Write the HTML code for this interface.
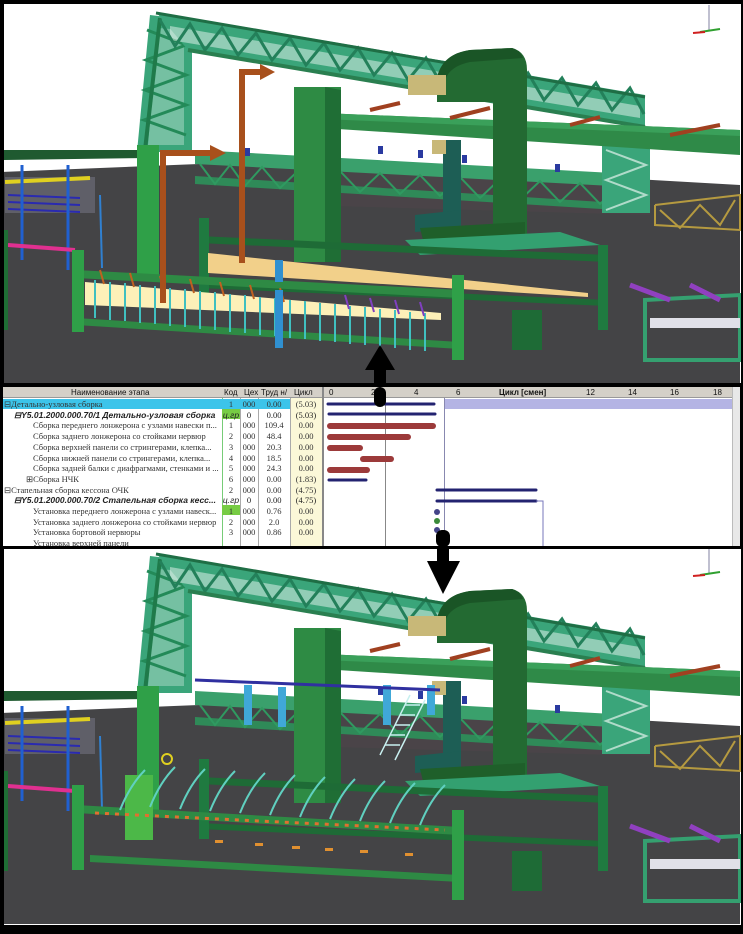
<!DOCTYPE html>
<html><head><meta charset="utf-8"><style>
*{margin:0;padding:0;box-sizing:border-box}
body{width:743px;height:934px;background:#000;position:relative;overflow:hidden;font-family:"Liberation Serif",serif}
.panel{position:absolute;left:4px;width:737px;background:#fff;overflow:hidden}
svg{display:block}
#tbl{position:absolute;left:3px;top:387px;width:737px;height:159px;background:#fff;overflow:hidden}
.row{position:absolute;left:0;height:11px;font-size:8.5px;line-height:11px;white-space:nowrap;color:#333}
.c{position:absolute;top:0;height:11px;text-align:center}
</style></head><body>

<!-- TOP PANEL -->
<div class="panel" style="top:4px;height:379px">
<svg width="737" height="379" viewBox="4 4 737 379">
<defs>
<g id="scene">
 <polygon points="0,172 300,160 740,185 740,383 0,383" fill="#444446"/>
 <polygon points="300,165 650,185 650,215 300,205" fill="#4a4448"/>
 <polygon points="0,150 150,150 150,158 0,160" fill="#1f5a30"/>
 <!-- back lower truss -->
 <polygon points="195,150 650,175 650,188 195,164" fill="#3aa06c"/>
 <polygon points="195,176 650,205 650,212 195,184" fill="#2f8a58"/>
 <polyline points="200,164 215,184 230,165 245,186 262,167 280,188 300,169 320,190 340,171 360,192 380,173 400,194 420,175 440,196 460,177 480,198 500,179 520,200 540,181 560,202 580,183 600,204 620,185 640,206" fill="none" stroke="#2f9a60" stroke-width="2"/>
 <g fill="#2a3aa0"><rect x="378" y="146" width="5" height="8"/><rect x="418" y="150" width="5" height="8"/><rect x="462" y="155" width="5" height="8"/><rect x="555" y="164" width="5" height="8"/><rect x="245" y="148" width="5" height="8"/></g>
 <!-- left leg of truss -->
 <polygon points="150,15 192,20 192,152 137,152" fill="#3aa57a"/>
 <polygon points="158,28 184,30 184,145 148,145" fill="#fff" opacity=".3"/>
 <polyline points="147,30 186,45 146,60 186,75 145,90 186,105 144,120 186,135" fill="none" stroke="#238a58" stroke-width="3"/>
 <line x1="160" y1="18" x2="145" y2="150" stroke="#1f7a4a" stroke-width="4"/>
 <!-- truss top -->
 <polygon points="156,12 645,95 645,128 188,50" fill="#3aa57a"/>
 <polygon points="170,26 640,106 640,118 170,40" fill="#fff" opacity=".45"/>
 <polyline points="160,20 175,46 190,24 205,50 222,28 238,55 256,33 272,60 290,38 306,65 324,43 340,70 358,48 374,75 392,53 408,80 426,58 442,85 460,63 476,90 494,68 510,95 528,73 544,100 562,78 578,105 596,83 612,110 630,88 644,114" fill="none" stroke="#23805a" stroke-width="3"/>
 <line x1="156" y1="13" x2="645" y2="97" stroke="#1f6e45" stroke-width="3"/>
 <line x1="188" y1="50" x2="645" y2="127" stroke="#2a7f50" stroke-width="4"/>
 <!-- right leg -->
 <polygon points="602,140 650,145 650,213 602,213" fill="#3aa57a"/>
 <polyline points="606,150 646,165 606,180 646,195 606,210" fill="none" stroke="#fff" stroke-width="2" opacity=".6"/>
 <g stroke="#b59a40" stroke-width="2" fill="none"><polyline points="655,205 740,195 740,230 655,225 655,205"/><polyline points="660,210 680,228 700,205 720,225 735,200"/></g>
 <!-- crane beam -->
 <polygon points="322,113 740,130 740,155 322,128" fill="#2f8a48"/>
 <polygon points="322,113 740,130 740,136 322,119" fill="#3aa05a"/>
 <line x1="370" y1="110" x2="400" y2="103" stroke="#a04020" stroke-width="4"/>
 <line x1="450" y1="118" x2="490" y2="108" stroke="#a04020" stroke-width="4"/>
 <line x1="570" y1="125" x2="600" y2="117" stroke="#a04020" stroke-width="4"/>
 <line x1="670" y1="135" x2="720" y2="125" stroke="#a04020" stroke-width="4"/>
 <!-- column -->
 <polygon points="294,87 341,87 341,262 294,262" fill="#2e8b44"/>
 <polygon points="325,87 341,90 341,262 325,262" fill="#1f6e35"/>
 <!-- arch -->
 <path d="M437,78 Q442,54 470,50 L512,48 Q527,52 527,70 L527,237 L493,237 L493,102 L437,102 Z" fill="#236a32"/>
 <path d="M437,78 Q442,54 470,50 L512,48 Q520,50 523,58 L470,62 Q450,66 445,80 Z" fill="#1a5526"/>
 <rect x="443" y="140" width="18" height="85" fill="#1d5e55"/>
 <polygon points="415,215 461,210 461,228 415,232" fill="#1d5e55"/>
 <polygon points="420,228 525,222 525,245 425,248" fill="#1f5f2a"/>
 <rect x="408" y="75" width="38" height="20" fill="#c8b878"/>
 <rect x="432" y="140" width="14" height="14" fill="#c8b878"/>
 <polygon points="405,240 560,232 600,245 420,255" fill="#33a070"/>
 <!-- back fence -->
 <polygon points="199,236 607,255 607,262 199,243" fill="#1e6b36"/>
 <polygon points="199,282 607,300 607,306 199,288" fill="#1e6b36"/>
 <rect x="199" y="218" width="10" height="80" fill="#1f7a40"/>
 <rect x="598" y="245" width="10" height="85" fill="#1f7a40"/>
 <!-- left misc -->
 <rect x="5" y="177" width="90" height="36" fill="#7a7a8a" opacity=".5"/>
 <g stroke="#2a2ab0" stroke-width="2"><line x1="8" y1="195" x2="80" y2="198"/><line x1="8" y1="202" x2="80" y2="205"/><line x1="8" y1="209" x2="80" y2="212"/></g>
 <line x1="5" y1="182" x2="90" y2="178" stroke="#e0d020" stroke-width="4"/>
 <line x1="22" y1="165" x2="22" y2="260" stroke="#2060d0" stroke-width="3"/>
 <line x1="68" y1="165" x2="68" y2="270" stroke="#2060d0" stroke-width="3"/>
 <line x1="100" y1="195" x2="102" y2="268" stroke="#3080d0" stroke-width="2"/>
 <line x1="8" y1="245" x2="75" y2="250" stroke="#e03090" stroke-width="4"/>
 <rect x="0" y="230" width="8" height="100" fill="#1f6e35"/>
 <rect x="137" y="145" width="22" height="130" fill="#2fa048"/>
 <!-- right stand -->
 <polygon points="645,300 740,295 740,360 645,360" fill="none" stroke="#35a070" stroke-width="4"/>
 <rect x="650" y="318" width="90" height="10" fill="#e0e0e8"/>
 <line x1="630" y1="285" x2="670" y2="300" stroke="#9040c0" stroke-width="5"/>
 <line x1="690" y1="285" x2="720" y2="300" stroke="#9040c0" stroke-width="5"/>
 <rect x="512" y="310" width="30" height="40" fill="#1e6b36"/>
</g>
</defs>
<use href="#scene"/>
 <polygon points="208,253 588,293 588,297 208,273" fill="#f2d08a"/>
 <polygon points="85,282 441,313 441,320 85,305" fill="#fdf0b8"/>
 <polygon points="76,270 460,290 460,298 76,278" fill="#2e8a44"/>
 <polygon points="76,318 460,342 460,349 76,325" fill="#2e8a44"/>
 <rect x="72" y="250" width="12" height="82" fill="#2fa048"/>
 <rect x="452" y="275" width="12" height="85" fill="#2fa048"/>
 <g stroke-width="2">
  <path d="M95,280v38M110,282v38M125,283v38M140,285v38M155,286v38M170,288v38M185,289v38M200,291v38M215,292v38M230,294v38M245,295v38M260,297v38M275,298v38M290,300v38M305,301v38M320,303v38M335,304v38M350,306v38M365,307v38M380,309v38M395,310v38M410,312v38M425,313v38" stroke="#40c0c0"/>
  <path d="M100,270l4,14M130,273l4,14M160,276l4,14M190,279l4,14M220,282l4,14M250,285l4,14M280,288l4,14" stroke="#c06020"/>
  <path d="M345,295l4,14M370,298l4,14M395,300l4,14M420,302l4,14" stroke="#8040c0"/>
 </g>
 <rect x="275" y="290" width="8" height="58" fill="#3090d0"/>
 <rect x="275" y="260" width="8" height="22" fill="#3090d0"/>
 <path d="M163,303V153H213" fill="none" stroke="#a8501c" stroke-width="6"/>
 <polygon points="210,145 226,153 210,161" fill="#a8501c"/>
 <path d="M242,263V72H262" fill="none" stroke="#a8501c" stroke-width="6"/>
 <polygon points="260,64 275,72 260,80" fill="#a8501c"/>
 <line x1="709" y1="5" x2="709" y2="30" stroke="#8080a0"/>
 <line x1="700" y1="32" x2="720" y2="29" stroke="#30a030" stroke-width="2"/>
 <line x1="693" y1="33" x2="705" y2="32" stroke="#d02020" stroke-width="2"/>
 <polygon points="380,345 365,370 395,370" fill="#000"/>
 <rect x="374" y="368" width="12" height="20" fill="#000"/>
</svg>
</div>

<!-- TABLE -->
<div id="tbl">
 <div style="position:absolute;left:0;top:0;width:737px;height:11px;background:#d4d0c8;border-bottom:1px solid #999;font-family:'Liberation Sans',sans-serif;font-size:8px;line-height:11px;color:#111">
  <span style="position:absolute;left:68px">Наименование этапа</span>
  <span style="position:absolute;left:221px">Код</span>
  <span style="position:absolute;left:241px">Цех</span>
  <span style="position:absolute;left:258px">Труд н/</span>
  <span style="position:absolute;left:291px">Цикл</span>
  <span style="position:absolute;left:496px;font-weight:bold">Цикл [смен]</span>
  <span style="position:absolute;left:326px">0</span><span style="position:absolute;left:368px">2</span><span style="position:absolute;left:411px">4</span><span style="position:absolute;left:453px">6</span><span style="position:absolute;left:583px">12</span><span style="position:absolute;left:625px">14</span><span style="position:absolute;left:667px">16</span><span style="position:absolute;left:710px">18</span>
 </div>
 <div style="position:absolute;left:287px;top:11px;width:32px;height:150px;background:#fbf8d8"></div>
 <div style="position:absolute;left:219px;top:11px;width:1px;height:150px;background:#7c7"></div>
 <div style="position:absolute;left:237px;top:11px;width:1px;height:150px;background:#aaa"></div>
 <div style="position:absolute;left:255px;top:11px;width:1px;height:150px;background:#aaa"></div>
 <div style="position:absolute;left:287px;top:11px;width:1px;height:150px;background:#aaa"></div>
 <div style="position:absolute;left:319px;top:0;width:2px;height:160px;background:#888"></div>
 <div style="position:absolute;left:729px;top:0;width:8px;height:160px;background:#e8e8e8;border-left:1px solid #bbb"></div>
 <div style="position:absolute;left:441px;top:12px;width:288px;height:10px;background:#b4b4e4"></div>
 <div style="position:absolute;left:382px;top:11px;width:1px;height:150px;background:#888"></div>
 <div style="position:absolute;left:441px;top:11px;width:1px;height:150px;background:#8888b0"></div>
 <div style="position:absolute;left:0;top:12px;width:219px;height:10px;background:#3cc4ea"></div>
 <div style="position:absolute;left:219px;top:22px;width:18px;height:10px;background:#7c4"></div>
 <div style="position:absolute;left:219px;top:118px;width:18px;height:10px;background:#7c4"></div>
 <div style="position:absolute;left:219px;top:12px;width:68px;height:10px;background:#3cc4ea"></div>

 <div class="row" style="top:12px"><span style="position:absolute;left:1px">⊟Детально-узловая сборка</span><span class="c" style="left:219px;width:18px">1</span><span class="c" style="left:237px;width:18px">000</span><span class="c" style="left:255px;width:32px">0.00</span><span class="c" style="left:287px;width:32px">(5.03)</span></div>
 <div class="row" style="top:22.7px;font-family:'Liberation Sans',sans-serif;font-weight:bold;font-style:italic;color:#222"><span style="position:absolute;left:11px">⊟Y5.01.2000.000.70/1 Детально-узловая сборка</span><span class="c" style="left:219px;width:18px;font-weight:normal">ц.гр</span><span class="c" style="left:237px;width:18px;font-weight:normal;font-style:normal;font-family:'Liberation Serif',serif">0</span><span class="c" style="left:255px;width:32px;font-weight:normal;font-style:normal;font-family:'Liberation Serif',serif">0.00</span><span class="c" style="left:287px;width:32px;font-weight:normal;font-style:normal;font-family:'Liberation Serif',serif">(5.03)</span></div>
 <div class="row" style="top:33.4px"><span style="position:absolute;left:30px">Сборка переднего лонжерона с узлами навески п...</span><span class="c" style="left:219px;width:18px">1</span><span class="c" style="left:237px;width:18px">000</span><span class="c" style="left:255px;width:32px">109.4</span><span class="c" style="left:287px;width:32px">0.00</span></div>
 <div class="row" style="top:44.1px"><span style="position:absolute;left:30px">Сборка заднего лонжерона со стойками нервюр</span><span class="c" style="left:219px;width:18px">2</span><span class="c" style="left:237px;width:18px">000</span><span class="c" style="left:255px;width:32px">48.4</span><span class="c" style="left:287px;width:32px">0.00</span></div>
 <div class="row" style="top:54.8px"><span style="position:absolute;left:30px">Сборка верхней панели со стрингерами, клепка...</span><span class="c" style="left:219px;width:18px">3</span><span class="c" style="left:237px;width:18px">000</span><span class="c" style="left:255px;width:32px">20.3</span><span class="c" style="left:287px;width:32px">0.00</span></div>
 <div class="row" style="top:65.5px"><span style="position:absolute;left:30px">Сборка нижней панели со стрингерами, клепка...</span><span class="c" style="left:219px;width:18px">4</span><span class="c" style="left:237px;width:18px">000</span><span class="c" style="left:255px;width:32px">18.5</span><span class="c" style="left:287px;width:32px">0.00</span></div>
 <div class="row" style="top:76.2px"><span style="position:absolute;left:30px">Сборка задней балки с диафрагмами, стенками и ...</span><span class="c" style="left:219px;width:18px">5</span><span class="c" style="left:237px;width:18px">000</span><span class="c" style="left:255px;width:32px">24.3</span><span class="c" style="left:287px;width:32px">0.00</span></div>
 <div class="row" style="top:86.9px"><span style="position:absolute;left:23px">⊞Сборка НЧК</span><span class="c" style="left:219px;width:18px">6</span><span class="c" style="left:237px;width:18px">000</span><span class="c" style="left:255px;width:32px">0.00</span><span class="c" style="left:287px;width:32px">(1.83)</span></div>
 <div class="row" style="top:97.6px"><span style="position:absolute;left:1px">⊟Стапельная сборка кессона ОЧК</span><span class="c" style="left:219px;width:18px">2</span><span class="c" style="left:237px;width:18px">000</span><span class="c" style="left:255px;width:32px">0.00</span><span class="c" style="left:287px;width:32px">(4.75)</span></div>
 <div class="row" style="top:108.3px;font-family:'Liberation Sans',sans-serif;font-weight:bold;font-style:italic;color:#222"><span style="position:absolute;left:11px">⊟Y5.01.2000.000.70/2 Стапельная сборка кесс...</span><span class="c" style="left:219px;width:18px;font-weight:normal">ц.гр</span><span class="c" style="left:237px;width:18px;font-weight:normal;font-style:normal;font-family:'Liberation Serif',serif">0</span><span class="c" style="left:255px;width:32px;font-weight:normal;font-style:normal;font-family:'Liberation Serif',serif">0.00</span><span class="c" style="left:287px;width:32px;font-weight:normal;font-style:normal;font-family:'Liberation Serif',serif">(4.75)</span></div>
 <div class="row" style="top:119px"><span style="position:absolute;left:30px">Установка переднего лонжерона с узлами навеск...</span><span class="c" style="left:219px;width:18px">1</span><span class="c" style="left:237px;width:18px">000</span><span class="c" style="left:255px;width:32px">0.76</span><span class="c" style="left:287px;width:32px">0.00</span></div>
 <div class="row" style="top:129.7px"><span style="position:absolute;left:30px">Установка заднего лонжерона со стойками нервюр</span><span class="c" style="left:219px;width:18px">2</span><span class="c" style="left:237px;width:18px">000</span><span class="c" style="left:255px;width:32px">2.0</span><span class="c" style="left:287px;width:32px">0.00</span></div>
 <div class="row" style="top:140.4px"><span style="position:absolute;left:30px">Установка бортовой нервюры</span><span class="c" style="left:219px;width:18px">3</span><span class="c" style="left:237px;width:18px">000</span><span class="c" style="left:255px;width:32px">0.86</span><span class="c" style="left:287px;width:32px">0.00</span></div>
 <div class="row" style="top:151px"><span style="position:absolute;left:30px">Установка верхней панели</span></div>

 <svg style="position:absolute;left:0;top:0" width="737" height="159" viewBox="3 387 737 159">
  <g stroke-linecap="round">
   <line x1="328" y1="404" x2="434" y2="404" stroke="#232370" stroke-width="3"/>
   <line x1="329" y1="414" x2="435" y2="414" stroke="#232370" stroke-width="3"/>
   <line x1="330" y1="426" x2="433" y2="426" stroke="#9c3a3a" stroke-width="6"/>
   <line x1="330" y1="437" x2="408" y2="437" stroke="#9c3a3a" stroke-width="6"/>
   <line x1="330" y1="448" x2="360" y2="448" stroke="#9c3a3a" stroke-width="6"/>
   <line x1="363" y1="459" x2="391" y2="459" stroke="#9c3a3a" stroke-width="6"/>
   <line x1="330" y1="470" x2="367" y2="470" stroke="#9c3a3a" stroke-width="6"/>
   <line x1="329" y1="480" x2="366" y2="480" stroke="#232370" stroke-width="3"/>
   <line x1="437" y1="490" x2="536" y2="490" stroke="#232370" stroke-width="3"/>
   <line x1="437" y1="501" x2="536" y2="501" stroke="#232370" stroke-width="3"/>
  </g>
  <path d="M536,501H543V546" fill="none" stroke="#7777bb" stroke-width="1"/>
  <circle cx="437" cy="512" r="3" fill="#444488"/>
  <circle cx="437" cy="521" r="3" fill="#3a8a3a"/>
  <circle cx="437" cy="530" r="3" fill="#444488"/>
  <rect x="374" y="387" width="12" height="20" rx="6" fill="#000"/>
  <rect x="436" y="530" width="14" height="17" rx="6" fill="#000"/>
 </svg>
</div>

<!-- BOTTOM PANEL -->
<div class="panel" style="top:549px;height:376px">
<svg width="737" height="376" viewBox="4 4 737 376">
<g transform="translate(0,-4)"><use href="#scene"/></g>
 <g fill="#40a8d8">
  <rect x="244" y="140" width="8" height="40"/><rect x="278" y="142" width="8" height="40"/><rect x="383" y="140" width="8" height="40"/><rect x="427" y="140" width="8" height="30"/>
 </g>
 <g stroke="#c8f0f0" stroke-width="1.5" fill="none"><path d="M380,210 L410,150 M395,215 L425,155 M385,200h15M390,190h15M395,180h15M400,170h15M405,160h15"/></g>
 <line x1="195" y1="135" x2="440" y2="145" stroke="#3030a0" stroke-width="3"/>
 <polygon points="76,260 460,282 460,290 76,268" fill="#2e8a44"/>
 <polygon points="90,310 460,330 460,337 90,317" fill="#2e8a44"/>
 <rect x="72" y="240" width="12" height="85" fill="#2fa048"/>
 <rect x="452" y="265" width="12" height="90" fill="#2fa048"/>
 <rect x="125" y="230" width="28" height="65" fill="#4cb848"/>
 <g stroke="#60d0c0" stroke-width="2" fill="none">
  <path d="M120,265q10,-25 25,-40M150,262q10,-25 25,-40M180,264q10,-25 25,-40M210,266q10,-25 25,-40M240,268q10,-25 25,-40M270,270q10,-25 25,-40M300,272q10,-25 25,-40M330,274q10,-25 25,-40M360,276q10,-25 25,-40M390,278q10,-25 25,-40M420,280q10,-25 25,-40"/>
 </g>
 <g fill="#e09030"><rect x="215" y="295" width="8" height="3"/><rect x="255" y="298" width="8" height="3"/><rect x="292" y="301" width="8" height="3"/><rect x="325" y="303" width="8" height="3"/><rect x="360" y="305" width="8" height="3"/><rect x="405" y="308" width="8" height="3"/></g>
 <line x1="95" y1="268" x2="445" y2="285" stroke="#e07030" stroke-width="3" stroke-dasharray="4,6"/>
 <circle cx="167" cy="214" r="5" fill="none" stroke="#e0d020" stroke-width="2"/>
 <line x1="709" y1="3" x2="709" y2="28" stroke="#8080a0"/>
 <line x1="700" y1="30" x2="720" y2="27" stroke="#30a030" stroke-width="2"/>
 <line x1="693" y1="31" x2="705" y2="30" stroke="#d02020" stroke-width="2"/>
 <rect x="437" y="0" width="12" height="18" fill="#000"/>
 <polygon points="427,16 460,16 443,49" fill="#000"/>
</svg>
</div>
</body></html>
